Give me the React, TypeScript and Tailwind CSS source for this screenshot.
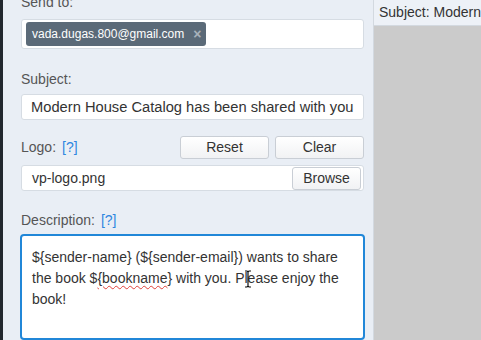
import React from 'react';

const Label: React.FC<{ text: string; help?: boolean; className?: string }> = ({ text, help, className = '' }) => (
    <div className={`text-[14px] leading-[20px] text-[#555] ${className}`}>
        {text}
        {help && <span className="ml-[6px] text-[#2f87e0]">[?]</span>}
    </div>
);

const Button: React.FC<{ children: React.ReactNode; className?: string }> = ({ children, className = '' }) => (
    <div
        className={`flex h-[23px] items-center justify-center rounded-[3px] border border-[#c9ced5] bg-gradient-to-b from-white to-[#f1f2f4] text-[14px] text-[#333] ${className}`}
    >
        {children}
    </div>
);

export default function App() {
    return (
        <div
            className="flex h-[340px] w-[481px] overflow-hidden bg-[#cbcbcb]"
            style={{ fontFamily: '"Liberation Sans", Arial, sans-serif' }}
        >
            {/* dark edge */}
            <div className="w-[3px] shrink-0 bg-[#22272e]"></div>

            {/* Form panel */}
            <div className="flex w-[371px] shrink-0 flex-col border-r border-[#d3d9e0] bg-[#e9eef5] pl-[18px] pr-[9px]">
                <Label text="Send to:" className="-mt-[8px]" />
                <div className="mt-[7px] flex h-[34px] items-center rounded-[3px] border border-[#d6dce3] bg-white px-[4px]">
                    <div className="flex h-[24px] w-[180px] items-center rounded-[3px] bg-[#5b6a78] pl-[6px] text-[12px] text-white">
                        <span>vada.dugas.800@gmail.com</span>
                        <span className="ml-[9px] text-[14px] font-bold leading-none text-[#a9b2bb]">×</span>
                    </div>
                </div>

                <Label text="Subject:" className="mt-[20px]" />
                <div className="mt-[5px] flex h-[30px] items-center whitespace-nowrap rounded-[3px] border border-[#d6dce3] bg-white px-[9px] text-[14.7px] text-[#333]">
                    Modern House Catalog has been shared with you
                </div>

                <div className="mt-[16px] flex h-[23px] items-center">
                    <Label text="Logo:" help className="flex-1" />
                    <Button className="w-[89px]">Reset</Button>
                    <Button className="ml-[6px] w-[89px]">Clear</Button>
                </div>
                <div className="mt-[6px] flex h-[30px] items-center justify-between rounded-[3px] border border-[#d6dce3] bg-white pl-[10px] pr-[2px] text-[14px] text-[#333]">
                    <span>vp-logo.png</span>
                    <Button className="w-[69px]">Browse</Button>
                </div>

                <Label text="Description:" help className="mt-[19px]" />
                <div className="relative -mx-px mt-[4px] h-[120px] rounded-[4px] border-2 border-[#2187d8] bg-white pl-[10px] pr-[8px] pt-[11px] text-[14px] leading-[21px] text-[#333]">
                    <div>{'${sender-name} (${sender-email}) wants to share'}</div>
                    <div>
                        {'the book $'}
                        <span className="underline decoration-wavy decoration-[#e0403a] decoration-1 underline-offset-2">{'{bookname'}</span>
                        {'} with you. Please enjoy the'}
                    </div>
                    <div>book!</div>
                    {/* mouse I-beam */}
                    <svg className="absolute left-[222px] top-[34px]" width="8" height="18" viewBox="0 0 8 18">
                        <path d="M1 1h2l1 1 1-1h2M4 2v14M1 17h2l1-1 1 1h2" fill="none" stroke="#111" strokeWidth="1.2" />
                    </svg>
                </div>
            </div>

            {/* Preview panel */}
            <div className="flex flex-1 flex-col">
                <div className="h-[26px] shrink-0 overflow-hidden whitespace-nowrap border-b border-[#d3d9e0] bg-[#edf1f7] pl-[5px] text-[14px] leading-[25px] text-[#333]">
                    Subject: Modern House Catalog has been shared with you
                </div>
                <div className="flex-1 bg-[#cbcbcb]"></div>
            </div>
        </div>
    );
}
